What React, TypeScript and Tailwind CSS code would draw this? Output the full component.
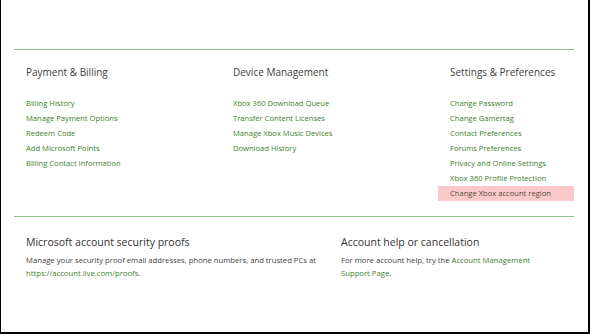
const linkCls = "text-[#3b7f2a]";

const columns = [
  {
    title: "Payment & Billing",
    links: [
      "Billing History",
      "Manage Payment Options",
      "Redeem Code",
      "Add Microsoft Points",
      "Billing Contact Information",
    ],
  },
  {
    title: "Device Management",
    links: [
      "Xbox 360 Download Queue",
      "Transfer Content Licenses",
      "Manage Xbox Music Devices",
      "Download History",
    ],
  },
  {
    title: "Settings & Preferences",
    links: [
      "Change Password",
      "Change Gamertag",
      "Contact Preferences",
      "Forums Preferences",
      "Privacy and Online Settings",
      "Xbox 360 Profile Protection",
      "Change Xbox account region",
    ],
  },
];

export default function App() {
  return (
    <div
      className="w-[590px] h-[334px] bg-white border-l border-r-2 border-b-2 border-black pl-[13px] pr-[14px] pt-[49px] text-[#333]"
      style={{ fontFamily: '"Open Sans", "Noto Sans", sans-serif' }}
    >
      <div className="border-t border-[#8cc28c] grid grid-cols-[207px_217px_1fr] pb-[15px]">
        {columns.map((c) => (
          <div key={c.title}>
            <h2 className="px-3 pt-[15px] text-[10px] leading-[14px] text-[#404040] whitespace-nowrap">
              {c.title}
            </h2>
            <ul className="mt-[17px]">
              {c.links.map((l) => (
                <li
                  key={l}
                  className={
                    "px-3 text-[7.6px] leading-[15px] whitespace-nowrap " +
                    (l === "Change Xbox account region" ? "bg-[#fbc9c9] text-[#5a4a3a]" : linkCls)
                  }
                >
                  {l}
                </li>
              ))}
            </ul>
          </div>
        ))}
      </div>
      <div className="border-t border-[#8cc28c] grid grid-cols-[327px_1fr] pt-[17px]">
        <div className="pl-[12px]">
          <h2 className="text-[10.5px] leading-[16px] text-[#333]">Microsoft account security proofs</h2>
          <p className="mt-[4px] text-[7.7px] leading-[13px] text-[#444]">
            Manage your security proof email addresses, phone numbers, and trusted PCs at{" "}
            <span className={linkCls}>https://account.live.com/proofs</span>.
          </p>
        </div>
        <div>
          <h2 className="text-[10.5px] leading-[16px] text-[#333]">Account help or cancellation</h2>
          <p className="mt-[4px] text-[7.7px] leading-[13px] text-[#444] w-[200px]">
            For more account help, try the <span className={linkCls}>Account Management Support Page</span>.
          </p>
        </div>
      </div>
    </div>
  );
}
